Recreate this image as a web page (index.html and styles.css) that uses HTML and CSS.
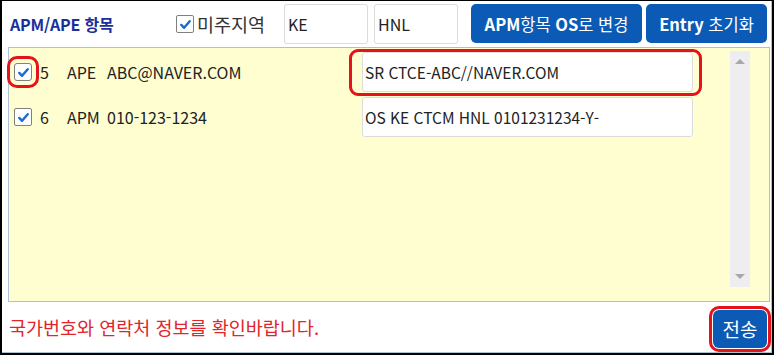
FILE: index.html
```html
<!DOCTYPE html>
<html lang="ko">
<head>
    <meta charset="UTF-8">
    <title>APM/APE 항목</title>
    <link rel="stylesheet" href="styles.css">
</head>
<body>
    <div class="frame">
        <div class="panel">
            <div class="header">
                <div class="title">APM/APE 항목</div>
                <label class="area">
                    <span class="check"><svg viewBox="0 0 16 16"><path d="M3.5 8.5 L6.5 11.5 L12.5 4.5"/></svg></span>
                    미주지역
                </label>
                <input class="code" type="text" value="KE">
                <input class="code" type="text" value="HNL">
                <button class="btn btn-os"><b>APM</b>항목 <b>OS</b>로 변경</button>
                <button class="btn btn-reset"><b>Entry</b> 초기화</button>
            </div>

            <div class="list">
                <div class="rows">
                    <div class="row">
                        <span class="check mark"><svg viewBox="0 0 16 16"><path d="M3.5 8.5 L6.5 11.5 L12.5 4.5"/></svg></span>
                        <span class="num">5</span>
                        <span class="type">APE</span>
                        <span class="value">ABC@NAVER.COM</span>
                        <span class="field mark"><input type="text" value="SR CTCE-ABC//NAVER.COM"></span>
                    </div>
                    <div class="row">
                        <span class="check"><svg viewBox="0 0 16 16"><path d="M3.5 8.5 L6.5 11.5 L12.5 4.5"/></svg></span>
                        <span class="num">6</span>
                        <span class="type">APM</span>
                        <span class="value">010-123-1234</span>
                        <span class="field"><input type="text" value="OS KE CTCM HNL 0101231234-Y-"></span>
                    </div>
                </div>
                <div class="scrollbar">
                    <span class="arrow up"></span>
                    <span class="arrow down"></span>
                </div>
            </div>

            <div class="footer">
                <div class="notice">국가번호와 연락처 정보를 확인바랍니다.</div>
                <button class="btn btn-send">전송</button>
            </div>
        </div>
    </div>
</body>
</html>
```

FILE: styles.css
```css
body {
    margin: 0;
    font-family: "Noto Sans CJK KR", "Noto Sans", sans-serif;
    background: #fff;
    color: #222;
}
.frame {
    width: 774px;
    height: 355px;
    box-sizing: border-box;
    border: 2px solid #000;
    border-top-width: 1px;
}
.panel {
    height: 100%;
    box-sizing: border-box;
    border-right: 1px solid #a9c3d3;
    border-bottom: 1px solid #a9c3d3;
    display: flex;
    flex-direction: column;
}
.header {
    display: flex;
    align-items: center;
    height: 46px;
    padding-left: 8px;
}
.title {
    width: 166px;
    font-size: 16px;
    font-weight: bold;
    color: #1b2f9c;
    letter-spacing: -0.2px;
}
.area {
    display: flex;
    align-items: center;
    gap: 3px;
    width: 108px;
    font-size: 18.5px;
    color: #333;
}
.check {
    width: 16px;
    height: 16px;
    border: 1px solid #808080;
    border-radius: 2px;
    background: #fff;
    display: inline-flex;
    align-items: center;
    justify-content: center;
    flex-shrink: 0;
}
.check svg {
    width: 15px;
    height: 15px;
    fill: none;
    stroke: #1a6ad0;
    stroke-width: 2.6;
    stroke-linecap: round;
    stroke-linejoin: round;
}
input {
    font-family: inherit;
    font-size: 16px;
    color: #222;
    box-sizing: border-box;
    border: 1px solid #dcdcdc;
    border-radius: 3px;
    background: #fff;
    outline: none;
}
.code {
    width: 84px;
    height: 40px;
    padding: 0 3px;
    margin-right: 6px;
}
.btn {
    font-family: inherit;
    color: #fff;
    background: #0b5bb6;
    border: none;
    border-radius: 5px;
    cursor: pointer;
    font-size: 16.5px;
    height: 39px;
    padding: 0;
    margin-top: -1px;
}
.btn b {
    font-weight: bold;
}
.btn-os {
    width: 171px;
    margin-left: 7px;
}
.btn-reset {
    width: 121px;
    margin-left: 4px;
}
.list {
    display: flex;
    height: 255px;
    box-sizing: border-box;
    margin-left: 6px;
    width: 762px;
    background: #fefed1;
    border: 1px solid #a9c3d3;
}
.rows {
    flex: 1;
    padding: 4px 0 0 5px;
    display: flex;
    flex-direction: column;
    gap: 5px;
}
.row {
    display: flex;
    align-items: center;
    height: 40px;
    font-size: 16px;
    color: #222;
}
.row .check {
    margin-right: 8px;
}
.num {
    width: 27px;
}
.type {
    width: 40px;
}
.value {
    width: 255px;
}
.field {
    position: relative;
    display: flex;
}
.field input {
    width: 331px;
    height: 40px;
    padding: 0 2px;
    font-size: 15.5px;
}
.row .check.mark {
    outline: 3.5px solid #e3121b;
    outline-offset: 4px;
    border-radius: 3px;
}
.field.mark::after {
    content: "";
    position: absolute;
    top: -3px;
    bottom: -4px;
    left: -13px;
    right: -9px;
    border: 3.5px solid #e3121b;
    border-radius: 9px;
}
.scrollbar {
    width: 20px;
    margin: 3px 19px 14px 0;
    background: #eeeef0;
    display: flex;
    flex-direction: column;
    justify-content: space-between;
    align-items: center;
    padding: 8px 0 8px;
}
.arrow {
    width: 0;
    height: 0;
    border-left: 5px solid transparent;
    border-right: 5px solid transparent;
}
.arrow.up {
    border-bottom: 5px solid #a8a8a8;
}
.arrow.down {
    border-top: 5px solid #a8a8a8;
}
.footer {
    flex: 1;
    display: flex;
    align-items: center;
    justify-content: space-between;
    padding: 0 4px 0 7px;
}
.notice {
    font-size: 18.5px;
    color: #e0252b;
}
.btn-send {
    width: 54px;
    height: 38px;
    font-size: 19px;
    border-radius: 6px;
    outline: 3.5px solid #e3121b;
    outline-offset: 1px;
    margin-top: 3px;
}
```
